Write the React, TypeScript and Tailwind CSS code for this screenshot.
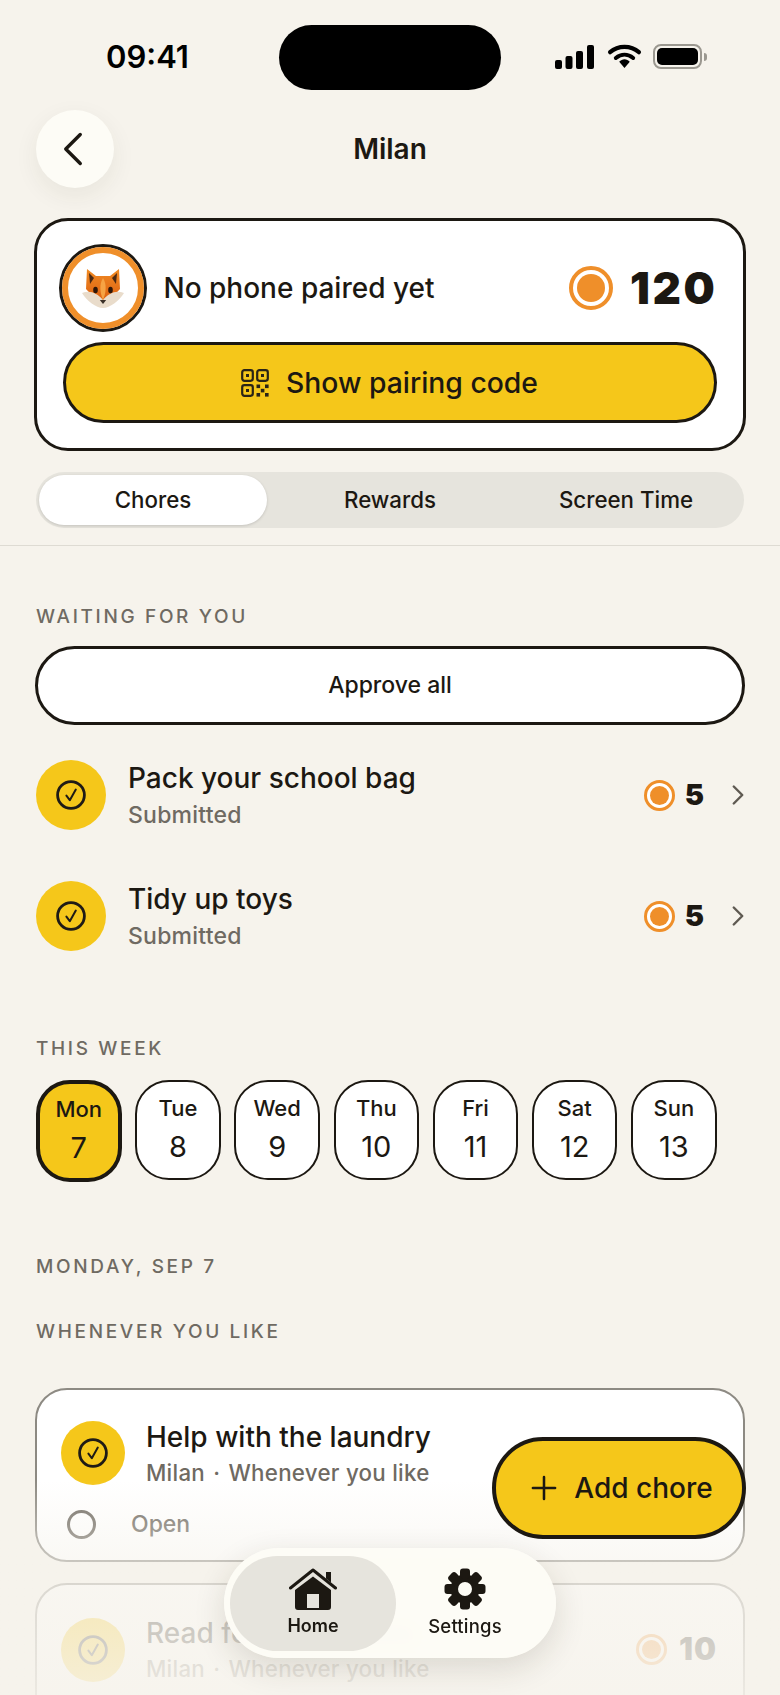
import { ChevronLeft, ChevronRight, Plus } from 'lucide-react'

const days = [
  { name: 'Mon', date: '7', active: true },
  { name: 'Tue', date: '8' },
  { name: 'Wed', date: '9' },
  { name: 'Thu', date: '10' },
  { name: 'Fri', date: '11' },
  { name: 'Sat', date: '12' },
  { name: 'Sun', date: '13' },
]

const waiting = ['Pack your school bag', 'Tidy up toys']

const Coin = ({ size = 'small' }: { size?: 'small' | 'large' }) =>
  size === 'large' ? (
    <span className="flex h-[44px] w-[44px] items-center justify-center rounded-full border-[4px] border-[#ef8f2a] bg-white">
      <span className="h-[28px] w-[28px] rounded-full bg-[#ef8f2a]" />
    </span>
  ) : (
    <span className="flex h-[31px] w-[31px] items-center justify-center rounded-full border-[3px] border-[#ef8f2a] bg-white">
      <span className="h-[19px] w-[19px] rounded-full bg-[#ef8f2a]" />
    </span>
  )

const CheckBadge = ({ size = 70 }: { size?: 70 | 64 }) => (
  <span
    className={
      size === 70
        ? 'flex h-[70px] w-[70px] shrink-0 items-center justify-center rounded-full bg-[#f5c71a]'
        : 'flex h-[64px] w-[64px] shrink-0 items-center justify-center rounded-full bg-[#f5c71a]'
    }
  >
    <svg className="h-[30px] w-[30px]" viewBox="0 0 30 30" fill="none" stroke="#1f1b16">
      <circle cx="15" cy="15" r="13.4" strokeWidth="2.8" />
      <path d="M10.4 15.6 L13.8 20.2 L19.8 9.6" strokeWidth="2" strokeLinecap="round" strokeLinejoin="round" />
    </svg>
  </span>
)

const SectionLabel = ({ children, className }: { children: string; className: string }) => (
  <p className={`text-[19px] leading-[22px] font-medium tracking-[0.14em] text-[#6f6a62] ${className}`}>{children}</p>
)

const FoxFace = () => (
  <svg className="h-[42px] w-[42px]" viewBox="0 0 42 42">
    <defs>
      <linearGradient id="fur" x1="0" y1="0" x2="0" y2="1">
        <stop offset="0" stopColor="#f08a22" />
        <stop offset="1" stopColor="#d9590f" />
      </linearGradient>
    </defs>
    <path d="M5 2 L14 9 H28 L37 2 L38 22 L21 40 L4 22 Z" fill="url(#fur)" />
    <path d="M7 6 L12 11 L8 17 Z" fill="#4a2812" />
    <path d="M35 6 L30 11 L34 17 Z" fill="#4a2812" />
    <path d="M0 26 C8 23 15 26 21 33 C27 26 34 23 42 26 C37 34 28 41 21 41 C14 41 5 34 0 26 Z" fill="#e9dccb" />
    <path d="M21 11 C25 17 24 26 21 33 C18 26 17 17 21 11 Z" fill="#f6a344" />
    <ellipse cx="13.5" cy="23" rx="2.3" ry="3.2" fill="#2e1608" />
    <ellipse cx="28.5" cy="23" rx="2.3" ry="3.2" fill="#2e1608" />
    <path d="M17.8 33 H24.2 L21 37 Z" fill="#3a3028" />
  </svg>
)

const QrIcon = () => (
  <svg className="h-[28px] w-[28px]" viewBox="0 0 28 28" fill="none" stroke="#2a2416">
    <rect x="1.2" y="1.2" width="10.6" height="10.6" rx="2.2" strokeWidth="2.2" />
    <rect x="16.2" y="1.2" width="10.6" height="10.6" rx="2.2" strokeWidth="2.2" />
    <rect x="1.2" y="16.2" width="10.6" height="10.6" rx="2.2" strokeWidth="2.2" />
    <rect x="5" y="5" width="3" height="3" fill="#2a2416" stroke="none" />
    <rect x="20" y="5" width="3" height="3" fill="#2a2416" stroke="none" />
    <rect x="5" y="20" width="3" height="3" fill="#2a2416" stroke="none" />
    <g fill="#2a2416" stroke="none">
      <rect x="15.5" y="15.5" width="3.6" height="3.6" />
      <rect x="24" y="15.5" width="3.6" height="3.6" />
      <rect x="19.8" y="19.8" width="3.6" height="3.6" />
      <rect x="15.5" y="24" width="3.6" height="3.6" />
      <rect x="24" y="24" width="3.6" height="3.6" />
    </g>
  </svg>
)

const HomeIcon = () => (
  <svg className="h-[42px] w-[48px]" viewBox="0 0 48 42">
    <path d="M1.5 20 L24 2 L46.5 20" fill="none" stroke="#1c1812" strokeWidth="3" strokeLinecap="round" strokeLinejoin="round" />
    <path d="M37 4 H42 V14.5 L37 10.5 Z" fill="#1c1812" />
    <path
      fillRule="evenodd"
      d="M24 8.5 L42 22 V39 C42 41 41 42 39 42 H9 C7 42 6 41 6 39 V22 Z M18 26 V40 H30 V26 Z"
      fill="#1c1812"
    />
  </svg>
)

const GearIcon = () => (
  <svg className="h-[42px] w-[42px]" viewBox="0 0 42 42" fill="#1c1812">
    <circle cx="21" cy="21" r="14.5" />
    {[0, 45, 90, 135, 180, 225, 270, 315].map((angle) => (
      <rect height="10" key={angle} rx="3" transform={`rotate(${angle} 21 21)`} width="10" x="16" y="0.5" />
    ))}
    <circle cx="21" cy="21" fill="#fdfcf5" r="7" />
  </svg>
)

const StatusIcons = () => (
  <div className="flex items-center">
    <svg className="h-[24px] w-[39px]" viewBox="0 0 39 24" fill="#000">
      <rect x="0" y="15" width="7" height="9" rx="2" />
      <rect x="10.5" y="11" width="7" height="13" rx="2" />
      <rect x="21" y="6" width="7" height="18" rx="2" />
      <rect x="32" y="0" width="7" height="24" rx="2" />
    </svg>
    <svg className="ml-[13px] h-[25px] w-[35px]" viewBox="0 0 34 26">
      <path d="M2 8.5 C10.5 1 23.5 1 32 8.5" fill="none" stroke="#000" strokeWidth="4.4" strokeLinecap="round" />
      <path d="M8 14.5 C13.5 10 20.5 10 26 14.5" fill="none" stroke="#000" strokeWidth="4.2" strokeLinecap="round" />
      <path d="M11.5 18.5 C14.5 15 19.5 15 22.5 18.5 L17 25 Z" fill="#000" />
    </svg>
    <div className="ml-[11px] flex items-center gap-[2px]">
      <span className="flex h-[25px] w-[49px] items-center justify-center rounded-[8px] border-[2px] border-[#9b9890]">
        <span className="h-[17px] w-[41px] rounded-[5px] bg-black" />
      </span>
      <span className="h-[8px] w-[3px] rounded-r-full bg-[#9b9890]" />
    </div>
  </div>
)

const ChoreMeta = () => (
  <p className="mt-[5px] text-[22.3px] leading-[28px] font-medium tracking-[0.012em] text-[#6f6a62]">
    Milan <span className="mx-[2px]">·</span> Whenever you like
  </p>
)

export default function App() {
  return (
    <div className="relative h-[1695px] w-[780px] overflow-hidden bg-[#f6f3ec] font-['Inter',sans-serif] text-[#1c1812]">
      {/* status bar */}
      <div className="relative flex h-[110px] items-start justify-between pt-[37px] pr-[73px] pl-[106px]">
        <span className="text-[31px] leading-[40px] font-semibold text-black">09:41</span>
        <span className="absolute top-[25px] left-[279px] h-[65px] w-[222px] rounded-full bg-black" />
        <div className="pt-[7px]">
          <StatusIcons />
        </div>
      </div>

      {/* header */}
      <div className="relative flex h-[78px] items-center justify-center">
        <button
          className="absolute left-[36px] flex h-[78px] w-[78px] items-center justify-center rounded-full bg-[#fdfcf6] shadow-[0_8px_24px_rgba(60,50,30,0.07)]"
          type="button"
        >
          <ChevronLeft className="-ml-[4px] h-[58px] w-[58px] text-[#1c1812]" strokeWidth={1.4} />
        </button>
        <h1 className="text-[28px] font-semibold">Milan</h1>
      </div>

      <div className="px-[34px] pt-[30px]">
        {/* profile card */}
        <section className="h-[233px] w-[712px] rounded-[34px] border-[3.5px] border-[#1c1812] bg-white pt-[21.5px] pr-[25.5px] pl-[21.5px]">
          <div className="flex h-[90px] items-center">
            <span className="flex h-[88px] w-[88px] items-center justify-center rounded-full border-[3px] border-[#1c1812] bg-white">
              <span className="flex h-full w-full items-center justify-center rounded-full border-[6px] border-[#ef8f2a] bg-white">
                <FoxFace />
              </span>
            </span>
            <span className="ml-[17px] text-[28px] font-medium">No phone paired yet</span>
            <span className="ml-auto flex items-center gap-[17px]">
              <Coin size="large" />
              <span className="text-[44px] leading-none font-black tracking-[0.06em] text-[#1c1812]">120</span>
            </span>
          </div>
          <button
            className="mt-[9px] ml-[4px] flex h-[81px] w-[654px] items-center justify-center gap-[17px] rounded-full border-[3px] border-[#1c1812] bg-[#f5c71a] pt-[2px] text-[28.3px] font-medium"
            type="button"
          >
            <QrIcon />
            Show pairing code
          </button>
        </section>

        {/* tabs */}
        <div className="mt-[21px] ml-[2px] grid h-[56px] w-[708px] grid-cols-3 items-center rounded-full bg-[#e6e4dd] text-[22.3px] font-medium">
          <span className="ml-[3px] flex h-[50px] w-[228px] items-center justify-center rounded-full bg-white shadow-[0_1px_3px_rgba(0,0,0,0.15)]">Chores</span>
          <span className="text-center">Rewards</span>
          <span className="text-center">Screen Time</span>
        </div>
      </div>

      <div className="mt-[17px] h-[1px] bg-[#dedbd3]" />

      <div className="px-[36px]">
        <SectionLabel className="mt-[60px]">WAITING FOR YOU</SectionLabel>

        <button
          className="mt-[18px] -ml-[1px] flex h-[79px] w-[710px] items-center justify-center rounded-full border-[3px] border-[#1c1812] bg-white text-[23px] font-medium"
          type="button"
        >
          Approve all
        </button>

        <div className="mt-[35px] flex flex-col gap-[51px]">
          {waiting.map((title) => (
            <div className="flex h-[70px] items-center" key={title}>
              <CheckBadge />
              <div className="ml-[22px]">
                <p className="-mt-[2px] text-[28px] leading-[36px] font-medium">{title}</p>
                <p className="mt-[5px] text-[23px] leading-[28px] font-medium tracking-[0.01em] text-[#6f6a62]">Submitted</p>
              </div>
              <div className="ml-auto -mr-[11px] flex items-center">
                <Coin />
                <span className="ml-[10px] text-[29px] font-black">5</span>
                <ChevronRight className="ml-[17px] h-[34px] w-[34px] text-[#5f5a52]" strokeWidth={1.7} />
              </div>
            </div>
          ))}
        </div>

        <SectionLabel className="mt-[87px]">THIS WEEK</SectionLabel>

        <div className="mt-[20px] flex gap-[13.7px]">
          {days.map((day) => (
            <div
              className={
                day.active
                  ? 'flex h-[102px] w-[85.5px] flex-col items-center justify-center rounded-[34px] border-[4px] border-[#1c1812] bg-[#f5c71a] pb-[2px]'
                  : 'flex h-[100px] w-[85.5px] flex-col items-center justify-center rounded-[34px] border-[2.5px] border-[#1c1812] bg-white pb-[2px]'
              }
              key={day.name}
            >
              <span className="text-[22px] leading-[30px] font-medium">{day.name}</span>
              <span className="mt-[6px] text-[29px] leading-[36px]">{day.date}</span>
            </div>
          ))}
        </div>

        <SectionLabel className="mt-[74px]">MONDAY, SEP 7</SectionLabel>
        <SectionLabel className="mt-[43px]">WHENEVER YOU LIKE</SectionLabel>

        {/* chore cards */}
        <div className="mt-[45px] -ml-[1px] flex flex-col gap-[21px]">
          <article className="h-[174px] w-[710px] rounded-[32px] border-[2.5px] border-[#8d8a83] bg-white pt-[31px] pl-[24px]">
            <div className="flex">
              <CheckBadge size={64} />
              <div className="ml-[21px]">
                <p className="-mt-[1px] text-[28px] leading-[34px] font-medium">Help with the laundry</p>
                <ChoreMeta />
              </div>
            </div>
            <div className="mt-[20px] flex items-center pl-[6px]">
              <span className="h-[29px] w-[29px] rounded-full border-[3px] border-[#6f6a62]" />
              <span className="ml-[35px] text-[23px] font-medium text-[#6f6a62]">Open</span>
            </div>
          </article>

          <article className="h-[174px] w-[710px] rounded-[32px] border-[2.5px] border-[#8d8a83] bg-white pt-[31px] pr-[26px] pl-[24px]">
            <div className="flex items-center">
              <CheckBadge size={64} />
              <div className="ml-[21px]">
                <p className="text-[28px] leading-[34px] font-medium">Read for 20 minutes</p>
                <ChoreMeta />
              </div>
              <div className="ml-auto flex items-center gap-[12px]">
                <Coin />
                <span className="text-[31px] font-black tracking-[0.03em]">10</span>
              </div>
            </div>
          </article>
        </div>
      </div>

      {/* fade over the list, behind the floating controls */}
      <div className="absolute right-0 bottom-0 left-0 h-[215px] bg-gradient-to-b from-[#f6f3ec]/0 via-[#f6f3ec]/75 via-[50%] to-[#f6f3ec]/90" />

      <button
        className="absolute top-[1437px] left-[492px] flex h-[102px] w-[254px] items-center justify-center gap-[11px] rounded-full border-[4px] border-[#1c1812] bg-[#f5c71a] text-[28px] font-medium"
        type="button"
      >
        <Plus className="h-[38px] w-[38px]" strokeWidth={1.6} />
        Add chore
      </button>

      {/* bottom nav */}
      <nav className="absolute top-[1548px] left-[224px] flex h-[110px] w-[332px] items-center rounded-full bg-[#fdfcf5]/95 pl-[6px] shadow-[0_10px_32px_rgba(50,40,20,0.14)] backdrop-blur-sm">
        <div className="relative flex h-[95px] w-[166px] flex-col items-center rounded-full bg-[#e6e4dd] pt-[12px]">
          <HomeIcon />
          <span className="mt-[4px] text-[18px] leading-[24px] font-semibold">Home</span>
        </div>
        <div className="relative flex h-[95px] w-[138px] flex-col items-center pt-[12px]">
          <GearIcon />
          <span className="mt-[4px] text-[18.5px] leading-[24px] font-medium tracking-[0.01em]">Settings</span>
        </div>
      </nav>
    </div>
  )
}
